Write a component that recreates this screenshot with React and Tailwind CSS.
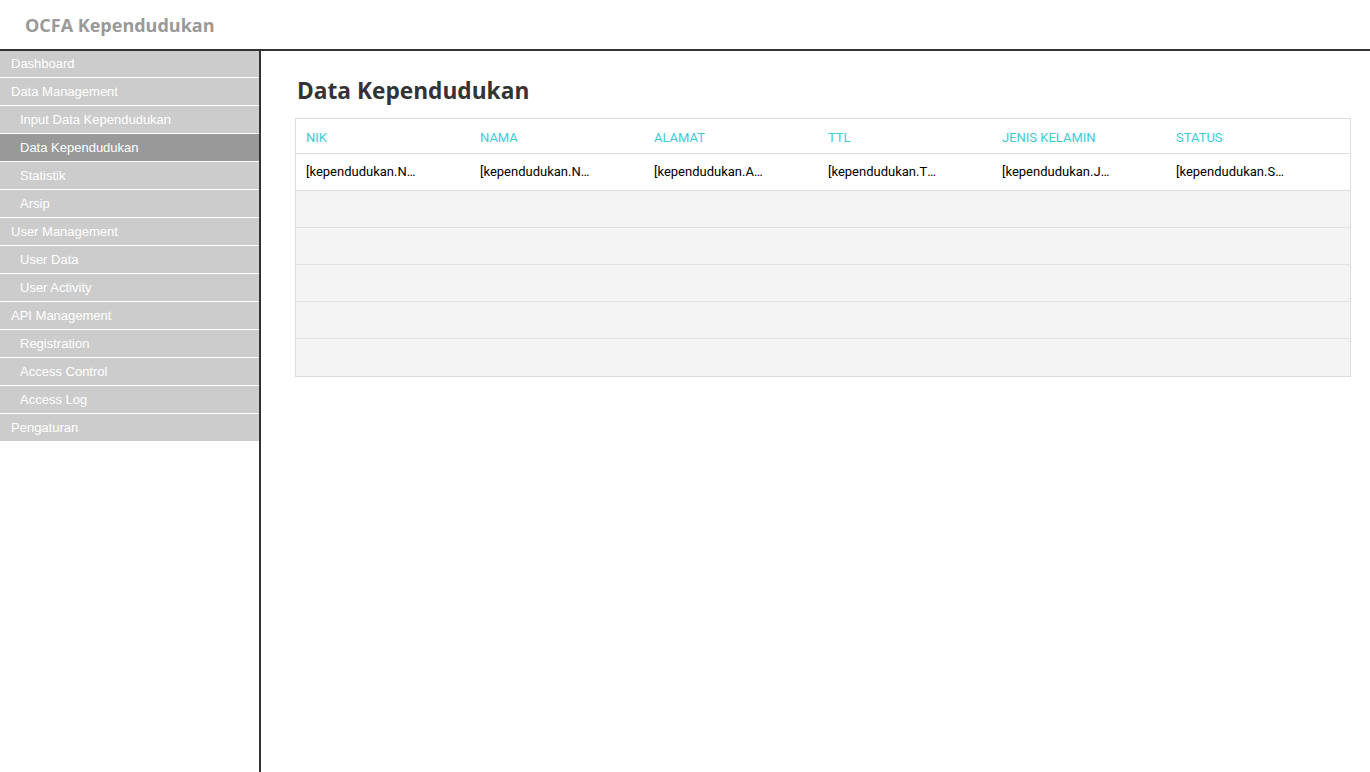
const menu = [
  { label: 'Dashboard', level: 0 },
  { label: 'Data Management', level: 0 },
  { label: 'Input Data Kependudukan', level: 1 },
  { label: 'Data Kependudukan', level: 1, active: true },
  { label: 'Statistik', level: 1 },
  { label: 'Arsip', level: 1 },
  { label: 'User Management', level: 0 },
  { label: 'User Data', level: 1 },
  { label: 'User Activity', level: 1 },
  { label: 'API Management', level: 0 },
  { label: 'Registration', level: 1 },
  { label: 'Access Control', level: 1 },
  { label: 'Access Log', level: 1 },
  { label: 'Pengaturan', level: 0 }
];

const columns = ['NIK', 'NAMA', 'ALAMAT', 'TTL', 'JENIS KELAMIN', 'STATUS'];
const row = [
  '[kependudukan.NIK]',
  '[kependudukan.NAMA]',
  '[kependudukan.ALAMAT]',
  '[kependudukan.TTL]',
  '[kependudukan.JENIS_KELAMIN]',
  '[kependudukan.STATUS]'
];

const Sidebar = () => (
  <nav className="w-[259px] shrink-0 font-['Liberation_Sans',Arial,sans-serif] text-[13px] text-white">
    {menu.map((item, idx) => (
      <div
        key={item.label}
        className={`flex items-center border-b border-white ${idx === 0 ? 'h-[27px]' : 'h-[28px]'} ${item.level ? 'pl-[20px]' : 'pl-[11px]'} ${item.active ? 'bg-[#999999]' : 'bg-[#cccccc]'}`}
      >
        {item.label}
      </div>
    ))}
  </nav>
);

const DataTable = () => (
  <div className="w-[1056px] border border-[#dddddd] font-['Roboto',sans-serif] text-[13px]">
    <div className="grid h-[35px] grid-cols-[repeat(6,174px)] items-center border-b border-[#dddddd] px-[10px] pt-[4px] text-[#3fcad6]">
      {columns.map((c) => (
        <div key={c}>{c}</div>
      ))}
    </div>
    <div className="grid h-[37px] grid-cols-[repeat(6,174px)] items-center border-b border-[#dddddd] px-[10px] text-black">
      {row.map((c) => (
        <div key={c} className="max-w-[112px] truncate">{c}</div>
      ))}
    </div>
    {[0, 1, 2, 3, 4].map((i) => (
      <div key={i} className={`h-[37px] bg-[#f4f4f4] ${i < 4 ? 'border-b border-[#e2e2e2]' : ''}`} />
    ))}
  </div>
);

export default function App() {
  return (
    <div className="flex h-[772px] flex-col bg-white">
      <header className="flex h-[51px] shrink-0 items-center border-b-2 border-[#333333] pl-[25px] pt-[2px]">
        <h1 className="font-['Open_Sans',sans-serif] text-[18px] font-bold text-[#999999]">OCFA Kependudukan</h1>
      </header>
      <div className="flex min-h-0 flex-1">
        <Sidebar />
        <div className="w-[2px] shrink-0 bg-[#333333]" />
        <main className="flex-1 pl-[34px] pt-[24px]">
          <h2 className="mb-[11px] ml-[2px] font-['Open_Sans',sans-serif] text-[22.7px] font-bold leading-[32px] text-[#333333]">
            Data Kependudukan
          </h2>
          <DataTable />
        </main>
      </div>
    </div>
  );
}
